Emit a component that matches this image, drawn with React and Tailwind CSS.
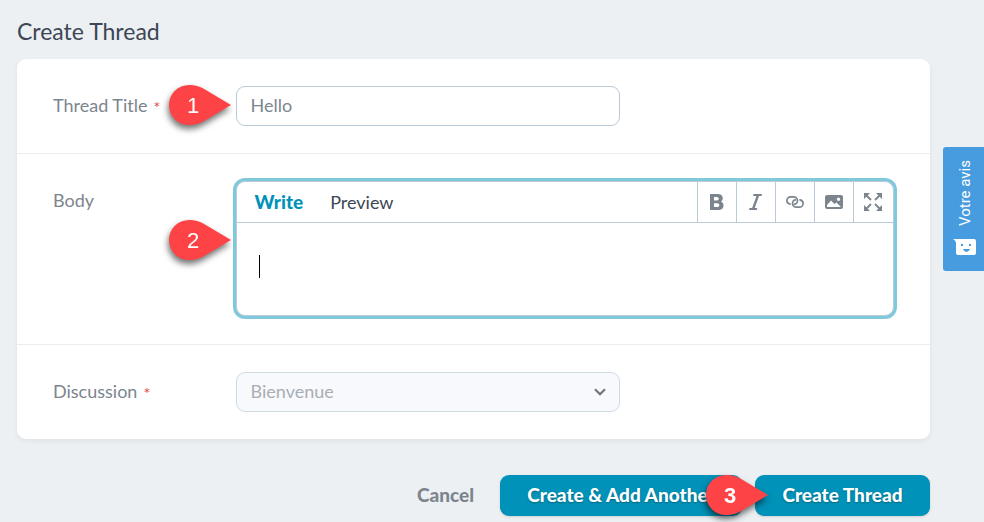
import { useState } from "react";

function Pin({ number, className }) {
  return (
    <svg
      viewBox="0 0 80 60"
      aria-label={`Step ${number}`}
      className={`pointer-events-none absolute h-[60px] w-[80px] drop-shadow-[-1px_4px_3px_rgba(0,0,0,0.55)] ${className}`}
    >
      <path
        d="M72 30 L46 14.5 C40 11 35.500 10 30 10 A20 20 0 0 0 30 50 C35.500 50 40 49 46 45.500 Z"
        fill="#fd4345"
      />
      <text
        x="34"
        y="38"
        textAnchor="middle"
        fill="#fff"
        fontSize="22"
        className="font-['Liberation_Sans',sans-serif]"
      >
        {number}
      </text>
    </svg>
  );
}

function Label({ htmlFor, required, children }) {
  return (
    <div className="w-1/5 px-9 pt-[7px]">
      <label
        htmlFor={htmlFor}
        className="flex items-center gap-[6px] whitespace-nowrap text-lg leading-6 text-[#7c858e]"
      >
        {children}
        {required && <span className="pt-1 text-base leading-5 text-[#e74444]">*</span>}
      </label>
    </div>
  );
}

const tools = [
  {
    name: "Bold",
    size: "h-4 w-[14px]",
    box: "0 0 14 16",
    art: (
      <path
        fillRule="evenodd"
        d="M0 0h7.500c3.300 0 5.300 1.600 5.300 4.200 0 1.600-.8 2.700-2 3.300 1.700.5 2.700 1.900 2.700 3.900 0 2.900-2.200 4.600-5.800 4.600H0zM4 3v3.500h2.700c1.300 0 2-.6 2-1.700S8 3 6.700 3zM4 9.300V13h3.100c1.500 0 2.200-.6 2.200-1.800s-.8-1.900-2.300-1.900z"
      />
    ),
  },
  {
    name: "Italic",
    size: "h-4 w-[13px]",
    box: "0 0 13 16",
    art: <path d="M4.500 0H13l-.4 2h-2.500L5.700 14h2.600l-.5 2H0l.5-2h2.600L7.500 2H4.100z" />,
  },
  {
    name: "Link",
    size: "h-[12px] w-[18px]",
    box: "0 0 18 12",
    art: (
      <g fill="none" stroke="currentColor" strokeWidth="1.700" strokeLinecap="round">
        <path d="M4 8.200C2.200 7.800.9 6.400.9 4.600.9 2.500 2.600.9 4.700.9h2.800c2.200 0 4 1.600 4 3.700S10 8.200 8.500 8.200" />
        <path d="M14 3.800c1.800.4 3.100 1.800 3.100 3.600 0 2.100-1.700 3.700-3.800 3.700h-2.800c-2.200 0-4-1.600-4-3.700S8 3.800 9.500 3.800" />
      </g>
    ),
  },
  {
    name: "Image",
    size: "h-[14px] w-[18px]",
    box: "0 0 18 14",
    art: (
      <path
        fillRule="evenodd"
        d="M2 0h14a2 2 0 0 1 2 2v10a2 2 0 0 1-2 2H2a2 2 0 0 1-2-2V2a2 2 0 0 1 2-2zM2 12h14L11.500 7.500 9.500 9 6 5.500 2 10zM13.500 2.500a1.700 1.700 0 1 0 0 3.400 1.700 1.700 0 0 0 0-3.400z"
      />
    ),
  },
  {
    name: "Full screen",
    size: "h-[18px] w-[18px]",
    box: "0 0 18 18",
    art: (
      <>
        <path d="M0 0h6L0 6zM18 0v6l-6-6zM0 18v-6l6 6zM18 18h-6l6-6z" />
        <path
          d="M2 2l5 5M16 2l-5 5M2 16l5-5M16 16l-5-5"
          fill="none"
          stroke="currentColor"
          strokeWidth="1.800"
        />
      </>
    ),
  },
];

export default function App() {
  const [title, setTitle] = useState("Hello");
  const [body, setBody] = useState("");

  return (
    <div className="min-h-screen bg-[#ecf0f3] pt-4 pr-[54px] pb-1 pl-[17px] font-[Lato,sans-serif]">
      <form onSubmit={(e) => e.preventDefault()}>
        <h1 className="mb-3 text-[23px] leading-[31px] text-[#3c4655]">Create Thread</h1>

        <div className="rounded-[9px] bg-white shadow-[0_2px_5px_rgba(0,0,0,0.06)]">
          <div className="relative flex border-b border-[#e7edf1] py-[27px]">
            <Label htmlFor="title" required>
              Thread Title
            </Label>
            <div className="w-1/2 px-9">
              <input
                id="title"
                type="text"
                value={title}
                onChange={(e) => setTitle(e.target.value)}
                className="block h-10 w-full rounded-[9px] border border-[#bacad6] bg-white px-[14px] pb-0.5 text-lg text-[#7c858e] outline-none"
              />
            </div>
            <Pin number={1} className="top-4 left-[142px]" />
          </div>

          <div className="relative flex border-b border-[#e7edf1] pt-[27px] pb-7">
            <Label htmlFor="body">Body</Label>
            <div className="w-4/5 px-9">
              <div className="overflow-hidden rounded-[9px] border border-[#bacad6] bg-white shadow-[0_0_0_3px_#80c9dd]">
                <div className="flex items-center justify-between border-b border-[#bacad6]">
                  <div className="flex items-center gap-[27px] pl-[18px] text-lg leading-6">
                    <button type="button" className="text-[19px] font-black text-[#0092b8]">
                      Write
                    </button>
                    <button type="button" className="text-[#3c4655]">
                      Preview
                    </button>
                  </div>
                  <div className="flex pr-px">
                    {tools.map((tool) => (
                      <button
                        key={tool.name}
                        type="button"
                        aria-label={tool.name}
                        className="flex h-10 w-[39px] items-center justify-center border-l border-[#bacad6] text-[#7c858e]"
                      >
                        <svg viewBox={tool.box} fill="currentColor" className={tool.size}>
                          {tool.art}
                        </svg>
                      </button>
                    ))}
                  </div>
                </div>
                <div className="flex h-[92px] items-start px-[22px] py-8">
                  <span className="h-[23px] w-px bg-black" />
                  <textarea
                    id="body"
                    value={body}
                    onChange={(e) => setBody(e.target.value)}
                    className="h-7 w-full resize-none bg-transparent text-lg leading-6 text-[#3c4655] caret-transparent outline-none"
                  />
                </div>
              </div>
            </div>
            <Pin number={2} className="top-[56px] left-[142px]" />
          </div>

          <div className="flex py-[27px]">
            <Label htmlFor="discussion" required>
              Discussion
            </Label>
            <div className="w-1/2 px-9">
              <div className="grid items-center">
                <select
                  id="discussion"
                  disabled
                  className="col-start-1 row-start-1 h-10 w-full appearance-none rounded-[9px] border border-[#cfdae3] bg-[#f7f9fd] px-[14px] pb-0.5 text-lg text-[#a9aeb4] opacity-100"
                >
                  <option>Bienvenue</option>
                </select>
                <svg
                  viewBox="0 0 12 8"
                  className="pointer-events-none col-start-1 row-start-1 mr-[14px] h-2 w-3 justify-self-end"
                >
                  <path d="M1 1.200L6 6.200L11 1.200" fill="none" stroke="#6f757d" strokeWidth="2.200" />
                </svg>
              </div>
            </div>
          </div>
        </div>

        <div className="mt-9 flex items-center justify-end gap-[13px] text-[19px] font-black">
          <button type="button" className="mr-[13px] text-[#7c858e]">
            Cancel
          </button>
          <button
            type="submit"
            className="h-[41px] w-[242px] rounded-[9px] bg-[#0092b8] whitespace-nowrap text-white shadow-sm [text-shadow:0_1px_2px_rgba(0,0,0,0.3)]"
          >
            Create &amp; Add Another
          </button>
          <div className="relative">
            <button
              type="submit"
              className="block h-[41px] w-[175px] rounded-[9px] bg-[#0092b8] whitespace-nowrap text-white shadow-sm [text-shadow:0_1px_2px_rgba(0,0,0,0.3)]"
            >
              Create Thread
            </button>
            <Pin number={3} className="-top-[10px] -left-[59px]" />
          </div>
        </div>
      </form>

      <button
        type="button"
        className="fixed top-[147px] right-0 flex h-[124px] w-[41px] flex-col items-center justify-end gap-[13px] rounded-l-[3px] bg-[#479bdf] pr-px pb-4 pl-[3px] text-white"
      >
        <span className="rotate-180 font-[Roboto,sans-serif] text-[15px] leading-4 [writing-mode:vertical-rl]">
          Votre avis
        </span>
        <svg viewBox="0 0 23 16" className="h-4 w-[23px]">
          <path
            d="M0 0H21a2 2 0 0 1 2 2v12a2 2 0 0 1-2 2H5a2 2 0 0 1-2-2V3.500Q2.500 1 0 0z"
            fill="#fff"
          />
          <path d="M8 5h2v2H8zM16 5h2v2h-2zM10 10h7q-1.200 3-3.500 3T10 10z" fill="#479bdf" />
        </svg>
      </button>
    </div>
  );
}
